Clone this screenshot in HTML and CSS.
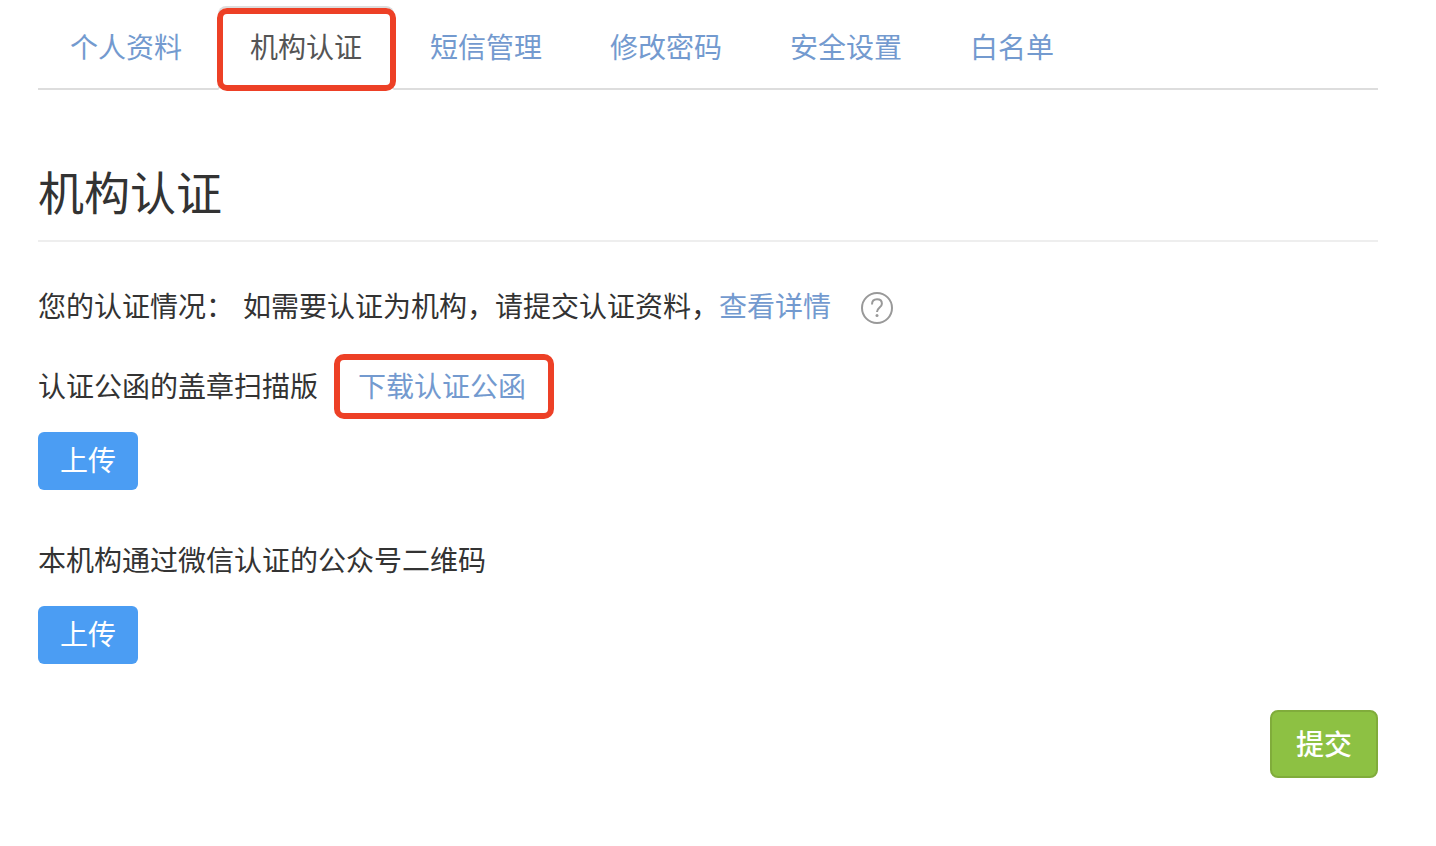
FILE: index.html
```html
<!DOCTYPE html>
<html lang="zh-CN">
<head>
<meta charset="utf-8">
<meta name="viewport" content="width=device-width, initial-scale=1">
<title>机构认证</title>
<link rel="stylesheet" href="styles.css">
</head>
<body>
<nav class="tabs">
  <a class="tab" href="#profile">个人资料</a>
  <a class="tab tab-active" href="#org" aria-current="page">机构认证</a>
  <a class="tab" href="#sms">短信管理</a>
  <a class="tab" href="#password">修改密码</a>
  <a class="tab" href="#security">安全设置</a>
  <a class="tab" href="#whitelist">白名单</a>
</nav>
<main>
  <h1 class="title">机构认证</h1>
  <form class="form">
    <div class="row status">
      <span class="status-label">您的认证情况：</span>
      <span>如需要认证为机构，请提交认证资料，</span>
      <a class="link" href="#detail">查看详情</a>
      <button class="help" type="button" aria-label="帮助">
        <svg class="help-icon" viewBox="0 0 34 34" fill="none" stroke="#999" aria-hidden="true">
          <circle cx="17" cy="17" r="15" stroke-width="2"/>
          <path d="M12 13.4c0-3.2 2-5.1 5-5.1 2.9 0 4.9 1.8 4.9 4.4 0 3.8-4.9 4-4.9 8.3" stroke-width="2"/>
          <circle cx="17" cy="24.6" r="1.5" fill="#999" stroke="none"/>
        </svg>
      </button>
    </div>
    <section class="field">
      <div class="row">
        <span id="letter-label">认证公函的盖章扫描版</span>
        <a class="link marked" href="#download">下载认证公函</a>
      </div>
      <button class="upload" type="button" aria-describedby="letter-label">上传</button>
    </section>
    <section class="field">
      <div class="row">
        <span id="qr-label">本机构通过微信认证的公众号二维码</span>
      </div>
      <button class="upload" type="button" aria-describedby="qr-label">上传</button>
    </section>
    <div class="actions">
      <button class="submit" type="submit">提交</button>
    </div>
  </form>
</main>
</body>
</html>
```
FILE: styles.css
```css
* {
  box-sizing: border-box;
}

body {
  margin: 0;
  padding: 6px 58px 48px 38px;
  background: #fff;
  color: #333;
  font-family: "Noto Sans CJK SC", sans-serif;
  font-size: 28px;
  line-height: 40px;
}

button {
  font: inherit;
  cursor: pointer;
}

.tabs {
  display: flex;
  gap: 4px;
  border-bottom: 2px solid #ddd;
}

.tab {
  position: relative;
  padding: 20px 32px 22px;
  color: #739acf;
  text-decoration: none;
}

.tab-active {
  margin-bottom: -2px;
  border: 2px solid #ddd;
  border-bottom-color: #fff;
  border-radius: 8px 8px 0 0;
  padding: 18px 30px 22px;
  background: #fff;
  color: #555;
}

/* Red frames that point out the tab and the download link */
.tab-active::after,
.marked::after {
  content: "";
  position: absolute;
  border: 6px solid #ed4026;
  border-radius: 10px;
  pointer-events: none;
}

.tab-active::after {
  inset: 0 -4px -3px -3px;
}

.marked::after {
  inset: -11px -28px -14px -24px;
}

.title {
  margin: 70px 0 0;
  padding-bottom: 20px;
  border-bottom: 2px solid #eee;
  font-size: 46px;
  font-weight: 400;
  line-height: 60px;
}

.form {
  margin-top: 43px;
}

.row {
  display: flex;
  align-items: center;
}

.status-label {
  margin-right: 9px;
}

.link {
  color: #739acf;
  text-decoration: none;
}

.help {
  display: flex;
  margin: 6px 0 0 29px;
  padding: 0;
  border: 0;
  background: none;
}

.help-icon {
  width: 34px;
  height: 34px;
}

.field {
  margin-top: 40px;
}

.field + .field {
  margin-top: 49px;
}

.marked {
  position: relative;
  margin-left: 40px;
}

.upload {
  display: block;
  margin-top: 27px;
  padding: 7px 22px 11px;
  border: 0;
  border-radius: 6px;
  background: #4b9df3;
  color: #fff;
}

.actions {
  display: flex;
  justify-content: flex-end;
  margin-top: 46px;
}

.submit {
  padding: 11px 24px 13px;
  border: 2px solid #80ac3b;
  border-radius: 8px;
  background: #8dc143;
  color: #fff;
  font-weight: 500;
}
```
